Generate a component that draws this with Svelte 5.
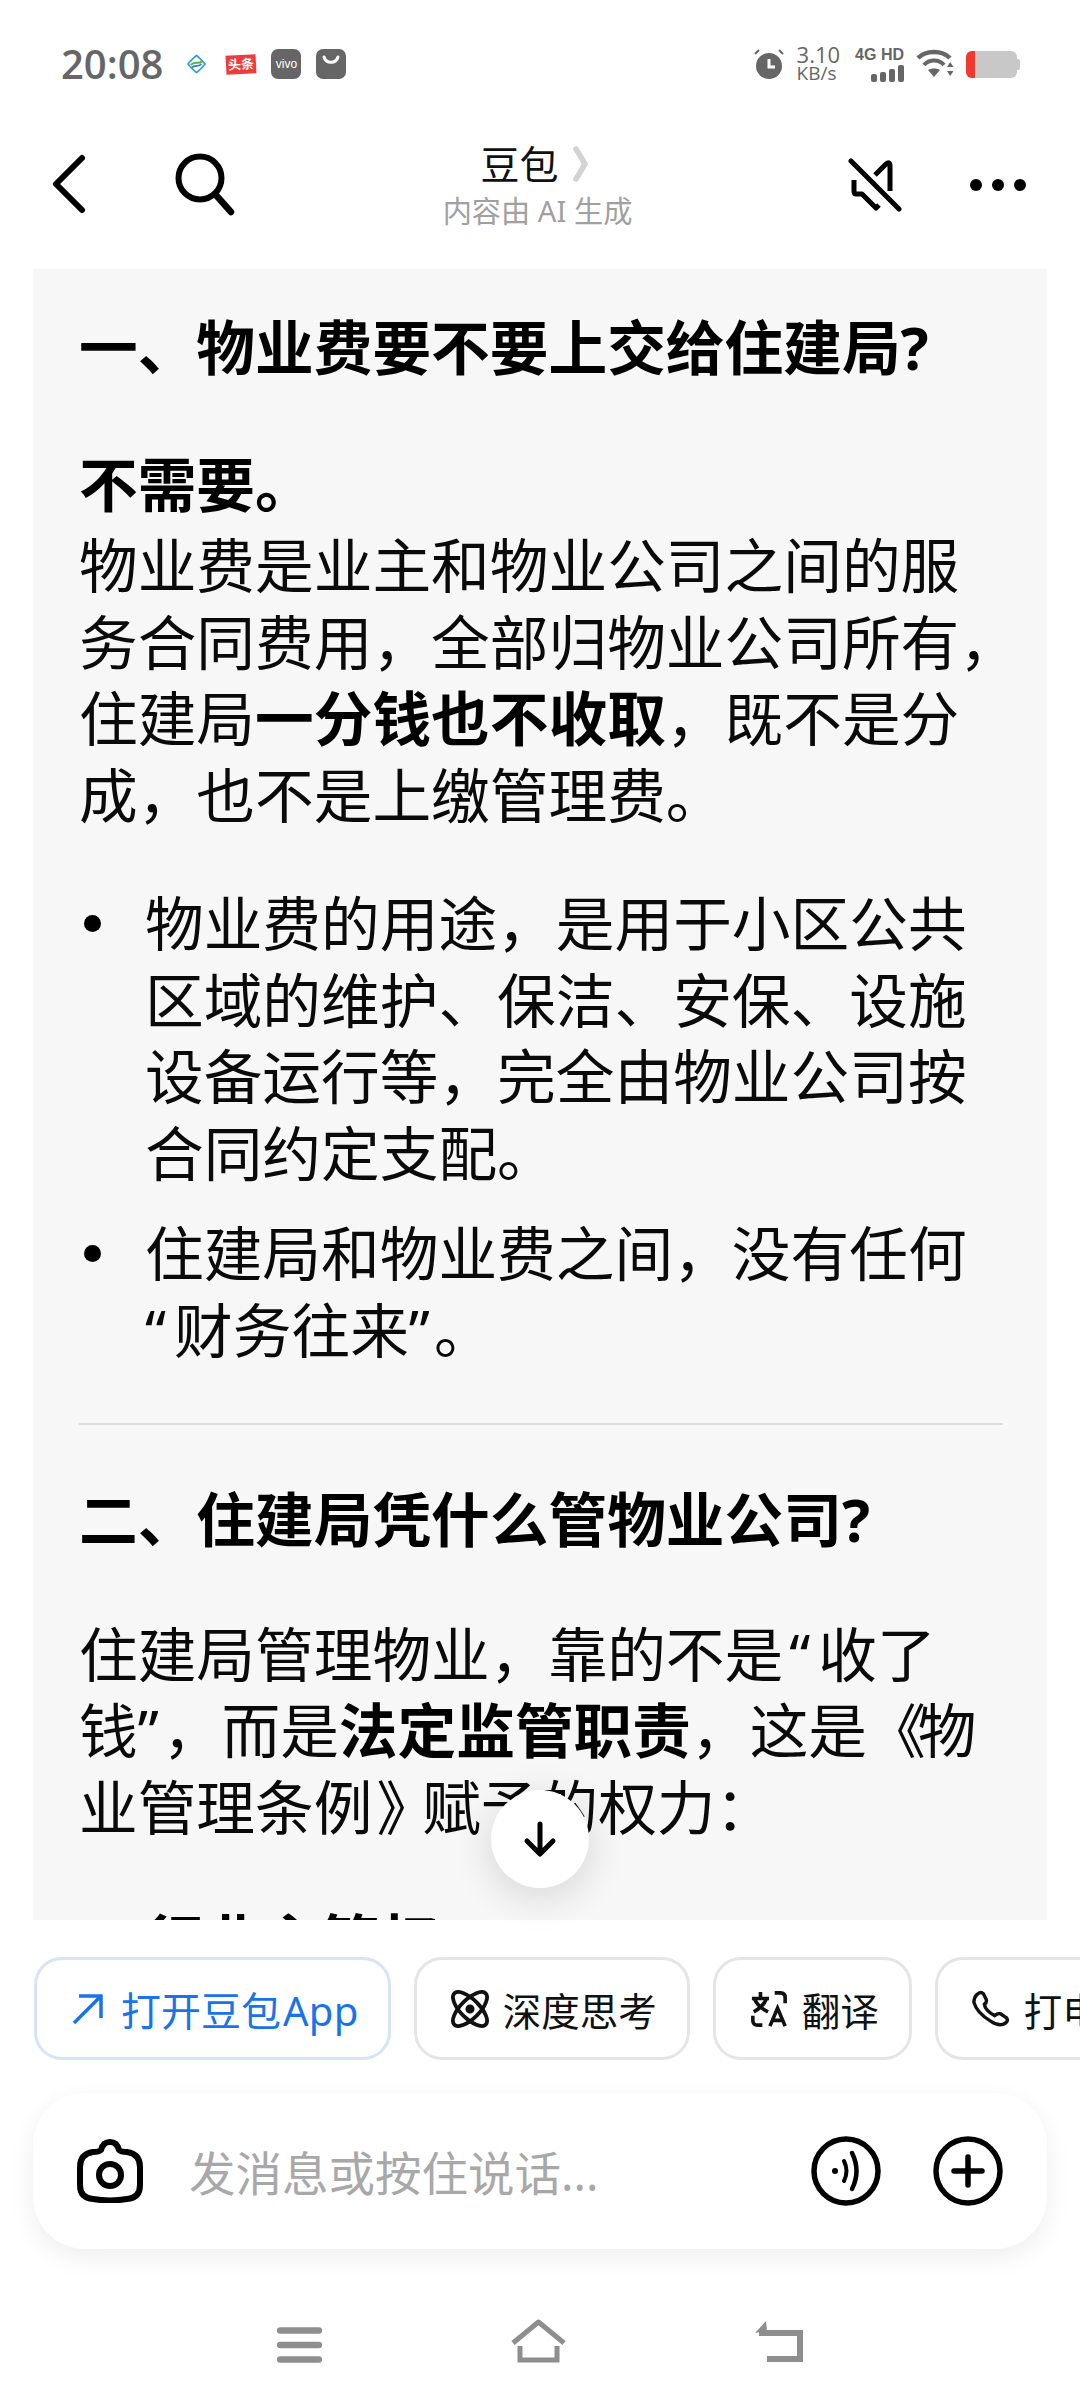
<script>
    const chips = [
        { label: '深度思考', icon: 'atom' },
        { label: '翻译', icon: 'translate' },
        { label: '打电话', icon: 'phone' },
    ];
</script>

<div class="page">
    <header class="status">
        <div class="status-left">
            <span class="time">20:08</span>
            <svg class="mobile" viewBox="0 0 20 20" width="19" height="20">
                <path d="M10 1 Q13 3 19 10 Q13 17 10 19 Q7 17 1 10 Q7 3 10 1 Z" fill="#fff" stroke="#2f9fd0" stroke-width="1.800" />
                <path d="M4 11 C8 6 12 11 16 7" fill="none" stroke="#5fae4a" stroke-width="2.200" />
                <path d="M5 14 C8 10 12 14 15 10" fill="none" stroke="#2a86c4" stroke-width="1.800" />
            </svg>
            <span class="toutiao">头条</span>
            <span class="app-badge vivo">vivo</span>
            <span class="app-badge">
                <svg viewBox="0 0 30 30" width="30" height="30"><path d="M8 8 C10 15 20 15 22 8" fill="none" stroke="#fff" stroke-width="3" stroke-linecap="round" /></svg>
            </span>
        </div>
        <div class="status-right">
            <svg viewBox="0 0 32 32" width="32" height="32">
                <circle cx="16" cy="18" r="13" fill="#666" />
                <path d="M16 11 V19 H22" fill="none" stroke="#fff" stroke-width="3" />
                <path d="M2 6 L6 2 M30 6 L26 2" stroke="#666" stroke-width="2" />
            </svg>
            <div class="speed"><span class="speed-num">3.10</span><span class="speed-unit">KB/s</span></div>
            <div class="signal">
                <span class="net">4G HD</span>
                <div class="bars"><i style="height:8px"></i><i style="height:10px"></i><i style="height:13px"></i><i style="height:17px"></i></div>
            </div>
            <svg viewBox="0 0 38 30" width="38" height="30">
                <path d="M2 9 C10 1 26 1 34 9" fill="none" stroke="#666" stroke-width="4.500" />
                <path d="M8 16 C13 10 23 10 28 16" fill="none" stroke="#666" stroke-width="4" />
                <path d="M12 21 C15 19 21 19 24 21 L18 28 Z" fill="#666" />
                <path d="M31 18 L37.500 18 L34.200 13 Z M31 22 L37.500 22 L34.200 27 Z" fill="#666" />
            </svg>
            <div class="battery"><span class="level"></span></div>
        </div>
    </header>

    <nav class="topbar">
        <div class="topbar-side">
            <svg viewBox="0 0 40 64" width="40" height="64"><path d="M33 5 L7 31 L33 57" fill="none" stroke="#000" stroke-width="6" stroke-linecap="round" stroke-linejoin="round" /></svg>
            <svg class="search" viewBox="0 0 62 66" width="62" height="66"><circle cx="26" cy="26" r="21.500" fill="none" stroke="#000" stroke-width="6" /><path d="M41 42 L57 60" stroke="#000" stroke-width="6.500" stroke-linecap="round" /></svg>
        </div>
        <div class="title-wrap">
            <div class="title">豆包<svg viewBox="0 0 16 36" width="16" height="36"><path d="M3 3 L12 18 L3 33" fill="none" stroke="#d2d2d2" stroke-width="5.500" stroke-linejoin="round" stroke-linecap="round" /></svg></div>
            <div class="subtitle">内容由 AI 生成</div>
        </div>
        <div class="topbar-side right">
            <svg viewBox="0 0 54 54" width="54" height="54">
                <path d="M27 17 L38 6 Q42 3 42 8 V33 M31 47 L28 50 L14 36 H8 Q6 36 6 33 V22" fill="none" stroke="#000" stroke-width="5" stroke-linejoin="round" />
                <path d="M3 3 L51 51" stroke="#000" stroke-width="5" stroke-linecap="round" />
            </svg>
            <div class="dots"><i></i><i></i><i></i></div>
        </div>
    </nav>

    <main class="chat">
        <div class="answer">
            <h2 class="first">一、物业费要不要上交给住建局?</h2>
            <p class="lead"><strong class="verdict">不需要。</strong>物业费是业主和物业公司之间的服<br />务合同费用，全部归物业公司所有，<br />住建局<strong>一分钱也不收取</strong>，既不是分<br />成，也不是上缴管理费。</p>
            <ul>
                <li>物业费的用途，是用于小区公共区域的维护、保洁、安保、设施设备运行等，完全由物业公司按合同约定支配。</li>
                <li>住建局和物业费之间，没有任何<br /><span class="q-open">“</span>财务往来<span class="q-close">”</span>。</li>
            </ul>
            <hr />
            <h2>二、住建局凭什么管物业公司?</h2>
            <p>住建局管理物业，靠的不是<span class="q-open mid">“</span>收了<br />钱<span class="q-close">”</span>，而是<strong>法定监管职责</strong>，这是<span class="book-open">《</span>物<br />业管理条例<span class="book-close">》</span>赋予的权力：</p>
            <ol>
                <li><strong>行业主管权</strong></li>
            </ol>
        </div>
        <button class="to-bottom" aria-label="scroll down">
            <svg viewBox="0 0 40 40" width="40" height="40"><path d="M20 5 V34 M7 22 L20 35 L33 22" fill="none" stroke="#000" stroke-width="5" stroke-linecap="round" stroke-linejoin="round" /></svg>
        </button>
    </main>

    <div class="chips">
        <div class="chip open">
            <svg viewBox="0 0 36 36" width="36" height="36"><path d="M4 32 L31 5 M9 5 H31 V27" fill="none" stroke="#1a73e8" stroke-width="3.500" /></svg>
            <span>打开豆包<span class="app-name">App</span></span>
        </div>
        {#each chips as chip}
            <div class="chip">
                {#if chip.icon === 'atom'}
                    <svg viewBox="2 2 36 36" width="38" height="38" fill="none" stroke="#111" stroke-width="3.600">
                        <ellipse cx="20" cy="20" rx="9" ry="21" transform="rotate(45 20 20)" />
                        <ellipse cx="20" cy="20" rx="9" ry="21" transform="rotate(-45 20 20)" />
                        <circle cx="20" cy="20" r="2.500" fill="#111" />
                    </svg>
                {:else if chip.icon === 'translate'}
                    <svg viewBox="0 0 40 40" width="38" height="38" fill="none" stroke="#111" stroke-width="3.800">
                        <path d="M2 9 H20 M11 2 V8 M5 10 C8 17 13 20 19 23 M17 10 C14 17 9 20 4 23" />
                        <path d="M26 3 H32 Q37 3 37 8 V14 M13 37 H8 Q3 37 3 32 V27" />
                        <path d="M21 38 L29 19 L37 38 M24 32 H34" />
                    </svg>
                {:else}
                    <svg viewBox="0 0 40 40" width="38" height="38" fill="none" stroke="#111" stroke-width="3.600" stroke-linejoin="round">
                        <path d="M5 5 Q9 1 12 4 L15 10 Q16 13 13 15 Q14 22 24 27 Q27 24 30 25 L36 29 Q39 32 35 35 Q29 39 20 33 Q5 24 2 13 Q2 8 5 5 Z" />
                    </svg>
                {/if}
                <span>{chip.label}</span>
            </div>
        {/each}
    </div>

    <div class="composer">
        <svg class="camera" viewBox="0 0 66 64" width="66" height="64" fill="none" stroke="#000" stroke-width="6">
            <path d="M24 11 Q26 3 33 3 Q40 3 42 11 Q44 13 50 13 Q63 15 63 28 V46 Q63 59 50 60 Q33 63 16 60 Q3 59 3 46 V28 Q3 15 16 13 Q22 13 24 11 Z" stroke-linejoin="round" />
            <circle cx="33" cy="36" r="11" />
        </svg>
        <span class="placeholder">发消息或按住说话...</span>
        <svg class="voice" viewBox="0 0 70 70" width="70" height="70" fill="none" stroke="#000">
            <circle cx="35" cy="35" r="32" stroke-width="5.500" />
            <circle cx="24" cy="35" r="3" fill="#000" stroke="none" />
            <path d="M33 25 Q38 35 33 45" stroke-width="4" stroke-linecap="round" />
            <path d="M41 17 Q50 35 41 53" stroke-width="4.500" stroke-linecap="round" />
        </svg>
        <svg class="plus" viewBox="0 0 70 70" width="70" height="70" fill="none" stroke="#000" stroke-linecap="round">
            <circle cx="35" cy="35" r="32" stroke-width="5.500" />
            <path d="M35 21 V49 M21 35 H49" stroke-width="5.500" />
        </svg>
    </div>

    <footer class="sysnav">
        <svg viewBox="0 0 45 36" width="45" height="36"><path d="M3 3.500 H42 M3 18 H42 M3 32.500 H42" stroke="#8e8e8e" stroke-width="6.500" stroke-linecap="round" /></svg>
        <svg viewBox="0 0 57 44" width="57" height="44" fill="none" stroke="#8e8e8e" stroke-width="5"><path d="M3 24 L28.500 3 L54 24" stroke-linejoin="round" /><path d="M10 27 V41 H47 V27" /></svg>
        <svg viewBox="0 0 48 44" width="48" height="44" fill="none" stroke="#8e8e8e" stroke-width="6"><path d="M4 14 H45 V40 H12" /><path d="M0 14 L11 2 L12 12 Z" fill="#8e8e8e" stroke="none" /></svg>
    </footer>
</div>

<style>
    :global(body) {
        margin: 0;
        background: #fff;
    }

    .page {
        width: 1080px;
        height: 2408px;
        overflow: hidden;
        display: flex;
        flex-direction: column;
        font-family: "Noto Sans", "Noto Sans CJK SC", sans-serif;
        color: #000;
    }

    .status {
        height: 125px;
        padding: 49px 60px 0 61px;
        box-sizing: border-box;
        display: flex;
        justify-content: space-between;
        align-items: flex-start;
    }

    .status-left {
        display: flex;
        align-items: center;
        height: 30px;
    }

    .time {
        font-family: "Open Sans", sans-serif;
        font-weight: 600;
        font-size: 40px;
        line-height: 30px;
        color: #666;
        margin-right: 24px;
    }

    .toutiao {
        margin-left: 20px;
        margin-right: 15px;
        width: 30px;
        height: 19px;
        background: #ee3b3b;
        color: #fff;
        font-size: 13px;
        font-weight: 700;
        line-height: 19px;
        text-align: center;
        transform: rotate(-3deg);
    }

    .app-badge {
        width: 30px;
        height: 30px;
        border-radius: 7px;
        background: #666;
        color: #fff;
        font-family: "Liberation Sans", sans-serif;
        font-size: 12px;
        line-height: 30px;
        text-align: center;
        margin-right: 15px;
        display: block;
    }

    .status-right {
        display: flex;
        align-items: center;
        gap: 12px;
        height: 36px;
        margin-top: -3px;
    }

    .speed {
        display: flex;
        flex-direction: column;
        font-family: "Open Sans", sans-serif;
        color: #666;
        line-height: 19px;
        margin-right: 3px;
    }

    .speed-num {
        font-size: 22px;
    }

    .speed-unit {
        font-size: 19px;
    }

    .signal {
        display: flex;
        flex-direction: column;
        align-items: flex-end;
        gap: 3px;
    }

    .net {
        font-family: "Liberation Sans", sans-serif;
        font-weight: 700;
        font-size: 16px;
        line-height: 15px;
        color: #666;
    }

    .bars {
        display: flex;
        align-items: flex-end;
        gap: 3px;
    }

    .bars i {
        display: block;
        width: 6px;
        background: #666;
        border-radius: 2px;
    }

    .battery {
        position: relative;
        width: 51px;
        height: 27px;
        margin-right: 3px;
        border-radius: 6px;
        background: #c8c8c8;
    }

    .battery::after {
        content: "";
        position: absolute;
        right: -3px;
        top: 8px;
        width: 3px;
        height: 11px;
        border-radius: 0 2px 2px 0;
        background: #c8c8c8;
    }

    .level {
        display: block;
        width: 9px;
        height: 100%;
        border-radius: 6px 0 0 6px;
        background: #f23a2c;
    }

    .topbar {
        height: 144px;
        padding: 0 54px 24px 49px;
        box-sizing: border-box;
        display: grid;
        grid-template-columns: 1fr auto 1fr;
        align-items: center;
    }

    .topbar-side {
        display: flex;
        align-items: center;
        gap: 85px;
    }

    .topbar-side.right {
        justify-content: flex-end;
        gap: 68px;
    }

    .title-wrap {
        text-align: center;
    }

    .title {
        font-size: 39px;
        line-height: 48px;
        color: #111;
        display: flex;
        justify-content: center;
        align-items: center;
        gap: 14px;
        margin-left: -6px;
    }

    .subtitle {
        font-size: 29.200px;
        line-height: 40px;
        padding-top: 3px;
        color: #a0a0a0;
    }

    .dots {
        display: flex;
        gap: 10px;
    }

    .dots i {
        display: block;
        width: 12px;
        height: 12px;
        border-radius: 50%;
        background: #000;
    }

    .chat {
        position: relative;
        height: 1651px;
        margin: 0 33px;
    }

    .answer {
        height: 100%;
        overflow: hidden;
        background: #f7f7f7;
        padding: 0 44px 0 46px;
        box-sizing: border-box;
        font-size: 58.700px;
        line-height: 76.500px;
        color: #0a0a0a;
        white-space: nowrap;
    }

    strong,
    h2 {
        font-weight: 700;
        color: #000;
    }

    h2 {
        font-size: 58.700px;
        line-height: 76.500px;
        margin: 0;
    }

    h2.first {
        padding-top: 40px;
    }

    p {
        margin: 0;
    }

    .lead {
        margin-top: 60px;
    }

    .verdict {
        display: block;
        margin-bottom: 5px;
    }

    .q-open {
        letter-spacing: 8px;
    }

    .q-open.mid {
        padding-left: 6px;
    }

    .q-close {
        letter-spacing: 4px;
    }

    .book-open {
        letter-spacing: -8px;
    }

    .book-close {
        margin-left: 4px;
        letter-spacing: -13px;
    }

    ul {
        list-style: none;
        margin: 52px 0 0;
        padding: 0 0 0 66px;
        white-space: normal;
    }

    ul li {
        position: relative;
        margin-bottom: 24px;
    }

    ul li::before {
        content: "";
        position: absolute;
        left: -61px;
        top: 30px;
        width: 17px;
        height: 17px;
        border-radius: 50%;
        background: #000;
    }

    hr {
        border: none;
        border-top: 2px solid #dedede;
        margin: 55px 0 0;
    }

    hr + h2 {
        margin-top: 56px;
    }

    hr + h2 + p {
        margin-top: 58px;
    }

    ol {
        list-style: none;
        margin: 58px 0 0;
        padding: 0 0 0 66px;
    }

    .to-bottom {
        position: absolute;
        left: 458px;
        top: 1521px;
        width: 98px;
        height: 98px;
        border: none;
        padding: 0;
        border-radius: 50%;
        background: #fff;
        box-shadow: 0 8px 40px rgba(0, 0, 0, 0.14);
        display: flex;
        align-items: center;
        justify-content: center;
    }

    .chips {
        margin-top: 37px;
        padding-left: 34px;
        display: flex;
        gap: 23px;
        height: 103px;
        overflow: hidden;
    }

    .chip {
        flex: none;
        display: flex;
        align-items: center;
        gap: 14px;
        box-sizing: border-box;
        padding: 0 30px 0 34px;
        border: 3px solid #e5e5e5;
        border-radius: 28px;
        font-size: 38.500px;
        color: #111;
    }

    .chip.open {
        border-color: #d5e4f6;
        color: #1a73e8;
        font-size: 40px;
        gap: 15px;
        padding: 0 29px 0 33px;
    }

    .app-name {
        margin-left: 2px;
        letter-spacing: 0.300px;
    }

    .composer {
        margin: 33px 33px 0;
        height: 156px;
        padding: 0 44px 0 44px;
        box-sizing: border-box;
        border-radius: 52px;
        background: #fff;
        box-shadow: 0 8px 26px rgba(0, 0, 0, 0.07);
        display: flex;
        align-items: center;
    }

    .placeholder {
        flex: 1;
        margin-left: 46px;
        font-size: 46.500px;
        color: #a8a8a8;
    }

    .plus {
        margin-left: 52px;
    }

    .sysnav {
        margin-top: 70px;
        display: flex;
        justify-content: center;
        align-items: flex-end;
        gap: 188px;
        height: 44px;
    }
</style>
